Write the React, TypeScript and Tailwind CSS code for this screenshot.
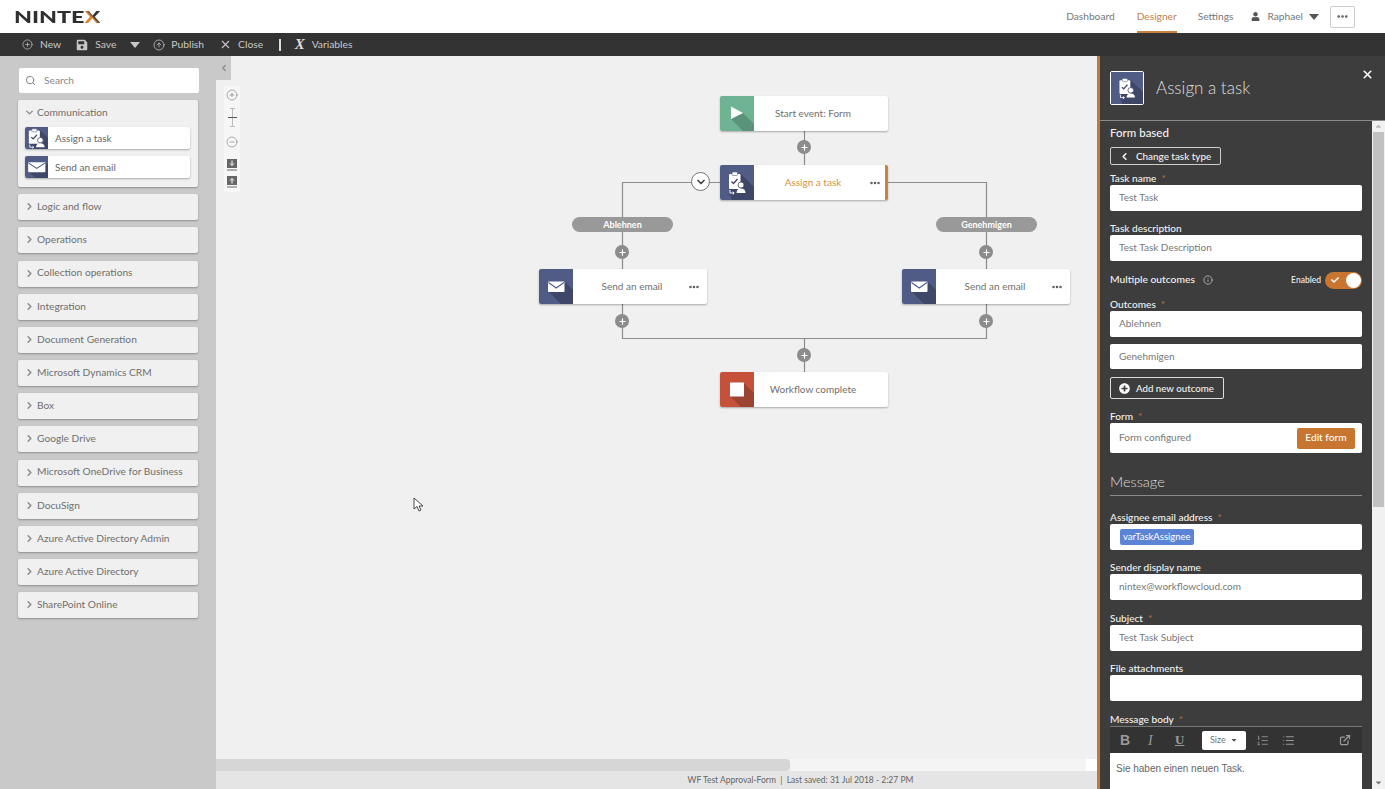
import React from 'react';
import {
  ChevronDown,
  ChevronLeft,
  ChevronRight,
  CircleArrowUp,
  CircleMinus,
  CirclePlus,
  Ellipsis,
  ExternalLink,
  Info,
  List,
  ListOrdered,
  Plus,
  Search,
  X,
} from 'lucide-react';
import { FaCaretDown, FaCheck, FaPlusCircle, FaSave, FaUser } from 'react-icons/fa';

const groups = [
  'Logic and flow',
  'Operations',
  'Collection operations',
  'Integration',
  'Document Generation',
  'Microsoft Dynamics CRM',
  'Box',
  'Google Drive',
  'Microsoft OneDrive for Business',
  'DocuSign',
  'Azure Active Directory Admin',
  'Azure Active Directory',
  'SharePoint Online',
];

type GlyphProps = { className?: string; box?: string };

const TaskGlyph: React.FC<GlyphProps> = ({ className, box = '0 0 34 35' }) => (
  <svg viewBox={box} className={className} preserveAspectRatio="none">
    <rect width="34" height="35" fill="#515c86" />
    <polygon points="20,8 34,22 34,35 12,35 9,27" fill="#3e4768" />
    <rect x="9" y="9" width="11.5" height="15" rx="1" fill="#fff" />
    <rect x="12" y="7" width="5.5" height="3.5" rx="1" fill="#fff" stroke="#515c86" strokeWidth="0.6" />
    <path d="M11.5 16.5l2 2 4-4.5" fill="none" stroke="#3e4768" strokeWidth="1.4" />
    <circle cx="21" cy="20" r="3" fill="#fff" stroke="#3e4768" strokeWidth="0.8" />
    <path d="M16.5 28c0-3.200 2-4.500 4.500-4.500s4.500 1.300 4.500 4.500z" fill="#fff" />
    <path d="M10 25v3h4M12.800 26.700l1.400 1.300-1.400 1.300" fill="none" stroke="#fff" strokeWidth="1" />
  </svg>
);

const MailGlyph: React.FC<GlyphProps> = ({ className, box = '0 0 34 35' }) => (
  <svg viewBox={box} className={className} preserveAspectRatio="none">
    <rect width="34" height="35" fill="#515c86" />
    <polygon points="9,22 26,13 34,21 34,35 22,35" fill="#3e4768" />
    <rect x="9" y="12.500" width="16.500" height="10.500" rx="1" fill="#fff" />
    <path d="M9.500 13.500l7.750 5.500 7.750-5.500" fill="none" stroke="#515c86" strokeWidth="1.100" />
  </svg>
);

const StartGlyph: React.FC<GlyphProps> = ({ className }) => (
  <svg viewBox="0 0 34 35" className={className} preserveAspectRatio="none">
    <rect width="34" height="35" fill="#6fb492" />
    <polygon points="11,23 23,17 34,28 34,35 23,35" fill="#5a9379" />
    <polygon points="11,10.500 23,17 11,23" fill="#fff" />
  </svg>
);

const StopGlyph: React.FC<GlyphProps> = ({ className }) => (
  <svg viewBox="0 0 34 35" className={className} preserveAspectRatio="none">
    <rect width="34" height="35" fill="#c5513a" />
    <polygon points="10,24 24,11 34,21 34,35 21,35" fill="#9c4331" />
    <rect x="10" y="10.500" width="14" height="14" fill="#fff" />
  </svg>
);

const Caret: React.FC<{ className?: string }> = ({ className }) => (
  <svg viewBox="0 0 10 6" className={`h-[6px] w-[10px] ${className ?? ''}`}>
    <polygon points="0,0 10,0 5,6" fill="currentColor" />
  </svg>
);

const NodeCard: React.FC<{
  pos: string;
  label: string;
  icon: React.ReactNode;
  dots?: boolean;
  selected?: boolean;
}> = ({ pos, label, icon, dots, selected }) => (
  <div
    className={`absolute ${pos} flex h-[35px] w-[168px] overflow-hidden rounded-[2px] bg-white shadow-[0_1px_2px_rgba(0,0,0,0.3)] ${
      selected ? 'border-r-[3px] border-[#c9833d]' : ''
    }`}
  >
    <div className="h-full w-[34px] shrink-0">{icon}</div>
    <div className={`flex w-[118px] shrink-0 items-center justify-center text-[10px] ${selected ? 'text-[#d8923f]' : 'text-[#6f6f6f]'}`}>
      {label}
    </div>
    {dots && (
      <div className="-ml-[3px] flex items-center text-[#555]">
        <Ellipsis size={12} strokeWidth={3} />
      </div>
    )}
  </div>
);

const PlusDot: React.FC<{ pos: string }> = ({ pos }) => (
  <div className={`absolute ${pos} flex h-[14px] w-[14px] items-center justify-center rounded-full bg-[#8c8c8c] text-white`}>
    <Plus size={9} strokeWidth={3} />
  </div>
);

const Outcome: React.FC<{ pos: string; label: string }> = ({ pos, label }) => (
  <div className={`absolute ${pos} flex h-[15px] w-[101px] items-center justify-center rounded-full bg-[#999] text-[9px] font-bold text-white`}>
    {label}
  </div>
);

const Req = () => <span className="ml-[5px] text-[#b5733a]">*</span>;

const Field: React.FC<{
  label: string;
  required?: boolean;
  value?: string;
  mt: string;
}> = ({ label, required, value, mt }) => (
  <div className={mt}>
    <div className="h-[14px] text-[10.100px] leading-[14px] font-medium text-[#f2f2f2]">
      {label}
      {required && <Req />}
    </div>
    <div className="flex h-[26px] items-center rounded-[2px] bg-white pb-[1px] pl-[9px] text-[10px] text-[#777]">{value}</div>
  </div>
);

const TopLink: React.FC<{ label: string; active?: boolean; className?: string }> = ({ label, active, className }) => (
  <div
    className={`flex h-full items-center ${className ?? ''} ${
      active ? 'border-b-2 border-[#c9833d] pt-[2px] text-[#c5804a]' : 'text-[#777]'
    }`}
  >
    {label}
  </div>
);

const ToolItem: React.FC<{ icon: React.ReactNode; label: string; className?: string; gap?: string }> = ({
  icon,
  label,
  className,
  gap = 'gap-[7px]',
}) => (
  <div className={`flex items-center ${gap} ${className ?? ''}`}>
    {icon}
    <span>{label}</span>
  </div>
);

export default function App() {
  return (
    <div className="flex h-screen w-full flex-col overflow-hidden bg-white font-[Lato,sans-serif]">
      {/* top nav */}
      <header className="flex h-[33px] shrink-0 items-center bg-white text-[10.200px]">
        <div className="ml-[14px] flex origin-left scale-x-[1.33] text-[17.500px] leading-none font-black text-[#2f2f2f]">
          NINTE<span className="bg-gradient-to-tr from-[#e2852d] from-45% to-[#333] to-55% bg-clip-text text-transparent">X</span>
        </div>
        <div className="ml-auto flex h-full items-center pr-[30px]">
          <TopLink label="Dashboard" />
          <TopLink label="Designer" active className="ml-[22px]" />
          <TopLink label="Settings" className="ml-[21px]" />
          <FaUser size={9} className="ml-[18px] text-[#555]" />
          <span className="ml-[7px] text-[#777]">Raphael</span>
          <Caret className="ml-[6px] text-[#555]" />
          <div className="ml-[11px] flex h-[22px] w-[25px] items-center justify-center rounded-[2px] border border-[#ccc] text-[#555]">
            <Ellipsis size={13} strokeWidth={3} />
          </div>
        </div>
      </header>

      {/* toolbar */}
      <div className="flex h-[23px] shrink-0 items-center bg-[#333] pl-[22px] text-[10.300px] text-[#c8c8c8]">
        <ToolItem icon={<CirclePlus size={11} strokeWidth={1.5} />} label="New" />
        <ToolItem icon={<FaSave size={12} />} label="Save" className="ml-[15px]" />
        <Caret className="ml-[14px]" />
        <ToolItem icon={<CircleArrowUp size={12} strokeWidth={1.5} />} label="Publish" className="ml-[13px]" gap="gap-[6px]" />
        <ToolItem icon={<X size={13} strokeWidth={2} />} label="Close" className="ml-[15px]" gap="gap-[6px]" />
        <div className="ml-[16px] h-[12px] w-[1.500px] bg-[#ddd]" />
        <ToolItem
          icon={<span className="font-['Liberation_Serif',serif] text-[15px] leading-none font-bold text-[#ddd] italic">X</span>}
          label="Variables"
          className="ml-[14px]"
        />
      </div>

      <div className="flex min-h-0 flex-1">
        {/* left palette */}
        <aside className="flex w-[216px] shrink-0 flex-col gap-[7.170px] bg-[#c9c9c9] pt-[12px] pl-[18px]">
          <div className="ml-px flex h-[25px] w-[180px] items-center gap-[8px] rounded-[2px] bg-white pl-[6px] text-[10.200px] text-[#888]">
            <Search size={11} className="text-[#777]" />
            Search
          </div>
          <div className="h-[87px] w-[180px] rounded-[2px] bg-[#f0f0f0] px-[7px] pt-[6px] shadow-[0_1px_2px_rgba(0,0,0,0.3)]">
            <div className="-ml-px flex h-[13px] items-center gap-[2px] text-[10.200px] text-[#6f6f6f]">
              <ChevronDown size={11} strokeWidth={3} className="text-[#888]" />
              Communication
            </div>
            <div className="mt-[8px] flex h-[22px] w-[165px] overflow-hidden rounded-[2px] bg-white shadow-[0_1px_2px_rgba(0,0,0,0.3)]">
              <TaskGlyph box="5 5 24 25" className="h-full w-[23px]" />
              <span className="ml-[7px] self-center text-[10px] text-[#666]">Assign a task</span>
            </div>
            <div className="mt-[7px] flex h-[22px] w-[165px] overflow-hidden rounded-[2px] bg-white shadow-[0_1px_2px_rgba(0,0,0,0.3)]">
              <MailGlyph box="6 6 22 23" className="h-full w-[23px]" />
              <span className="ml-[7px] self-center text-[10px] text-[#666]">Send an email</span>
            </div>
          </div>
          {groups.map((g) => (
            <div
              key={g}
              className="flex h-[26px] w-[180px] shrink-0 items-center gap-[2px] rounded-[2px] bg-[#f0f0f0] pb-[1px] pl-[6px] text-[10.200px] text-[#6f6f6f] shadow-[0_1px_2px_rgba(0,0,0,0.3)]"
            >
              <ChevronRight size={11} strokeWidth={3} className="text-[#888]" />
              {g}
            </div>
          ))}
        </aside>

        {/* canvas */}
        <main className="flex min-w-0 flex-1 flex-col bg-[#f0f0f0]">
          <div className="relative min-h-0 flex-1">
            <div className="absolute top-0 left-0 flex h-[24px] w-[15px] items-center justify-center bg-[#c9c9c9] text-[#888]">
              <ChevronLeft size={10} strokeWidth={3} />
            </div>

            {/* zoom strip */}
            <div className="absolute top-[30px] left-[8px] flex h-[106px] w-[16px] flex-col items-center bg-[#f6f6f6] pt-[3px] text-[#777]">
              <CirclePlus size={12} strokeWidth={1.2} />
              <div className="relative mt-[7px] h-[19px] w-px bg-[#bbb]">
                <div className="absolute top-0 -left-[2px] h-px w-[5px] bg-[#bbb]" />
                <div className="absolute top-[9px] -left-[4px] h-px w-[9px] bg-[#555]" />
                <div className="absolute bottom-0 -left-[2px] h-px w-[5px] bg-[#bbb]" />
              </div>
              <CircleMinus size={12} strokeWidth={1.2} className="mt-[9px]" />
              <svg viewBox="0 0 10 12" className="mt-[11px] h-[12px] w-[10px]">
                <rect width="10" height="9" fill="#666" />
                <path d="M5 1.500v5M3 4.500l2 2 2-2" fill="none" stroke="#fff" strokeWidth="1" />
                <rect y="10.500" width="10" height="1" fill="#666" />
              </svg>
              <svg viewBox="0 0 10 12" className="mt-[5px] h-[12px] w-[10px]">
                <rect width="10" height="9" fill="#666" />
                <path d="M5 7.500v-5M3 4.500l2-2 2 2" fill="none" stroke="#fff" strokeWidth="1" />
                <rect y="10.500" width="10" height="1" fill="#666" />
              </svg>
            </div>

            {/* connectors */}
            <svg className="absolute inset-0 h-full w-full" fill="none" stroke="#8c8c8c" strokeWidth="1.200">
              <path d="M588.500 75V109" />
              <path d="M504 126.500H406.500V213" />
              <path d="M672 126.500H770.500V213" />
              <path d="M406.500 248V282.500H770.500V248" />
              <path d="M588.500 282V316" />
            </svg>

            <NodeCard pos="left-[504px] top-[40px]" label="Start event: Form" icon={<StartGlyph className="h-full w-full" />} />
            <NodeCard pos="left-[504px] top-[109px]" label="Assign a task" icon={<TaskGlyph className="h-full w-full" />} selected dots />
            <NodeCard pos="left-[323px] top-[213px]" label="Send an email" icon={<MailGlyph className="h-full w-full" />} dots />
            <NodeCard pos="left-[686px] top-[213px]" label="Send an email" icon={<MailGlyph className="h-full w-full" />} dots />
            <NodeCard pos="left-[504px] top-[316px]" label="Workflow complete" icon={<StopGlyph className="h-full w-full" />} />

            <div className="absolute top-[116px] left-[475px] flex h-[19px] w-[19px] items-center justify-center rounded-full border border-[#777] bg-white text-[#444]">
              <ChevronDown size={12} strokeWidth={3.5} />
            </div>
            <Outcome pos="left-[356px] top-[161px]" label="Ablehnen" />
            <Outcome pos="left-[720px] top-[161px]" label="Genehmigen" />
            <PlusDot pos="left-[581px] top-[84px]" />
            <PlusDot pos="left-[399px] top-[189px]" />
            <PlusDot pos="left-[763px] top-[189px]" />
            <PlusDot pos="left-[399px] top-[258px]" />
            <PlusDot pos="left-[763px] top-[258px]" />
            <PlusDot pos="left-[581px] top-[292px]" />

            {/* mouse pointer */}
            <svg viewBox="0 0 12 16" className="absolute top-[441px] left-[197px] h-[16px] w-[12px]">
              <path d="M1 1v11l3-2.500 2 4.500 2-1-2-4h4z" fill="#fff" stroke="#333" strokeWidth="0.9" />
            </svg>
          </div>

          {/* horizontal scrollbar */}
          <div className="flex h-[12px] shrink-0 bg-[#f4f4f4]">
            <div className="h-full w-[574px] rounded-r-[4px] bg-[#d6d6d6]" />
            <div className="ml-auto h-full w-[11px] bg-white" />
          </div>
          <div className="flex h-[18px] shrink-0 items-center justify-center bg-[#e5e5e5] pl-[288px] text-[8.500px] text-[#666]">
            WF Test Approval-Form&nbsp; |&nbsp; Last saved: 31 Jul 2018 - 2:27 PM
          </div>
        </main>

        {/* right settings panel */}
        <aside className="flex w-[288px] shrink-0 flex-col border-l-[3px] border-[#c07a3e] bg-[#3d3d3d] text-[#f2f2f2]">
          <div className="flex h-[65px] shrink-0 items-center border-b border-[#8a8a8a] pl-[10px]">
            <div className="h-[34px] w-[34px] overflow-hidden rounded-[2px] border border-white">
              <TaskGlyph className="h-full w-full" />
            </div>
            <div className="ml-[12px] text-[17px] font-light text-[#ddd]">Assign a task</div>
            <X size={13} strokeWidth={3} className="mt-[-27px] ml-auto mr-[11px] text-white" />
          </div>

          <div className="flex min-h-0 flex-1">
            <div className="min-w-0 flex-1 overflow-hidden pl-[10px] pr-[10px]">
              <div className="w-[252px]">
                <div className="mt-[5px] h-[14px] text-[11.500px] leading-[14px] font-medium">Form based</div>
                <div className="mt-[7px] flex h-[18px] w-[111px] items-center gap-[6px] rounded-[2px] border border-[#ccc] pl-[8px] text-[9.900px] font-medium">
                  <ChevronLeft size={11} strokeWidth={3.5} />
                  Change task type
                </div>

                <Field label="Task name" required value="Test Task" mt="mt-[6px]" />
                <Field label="Task description" value="Test Task Description" mt="mt-[10px]" />

                <div className="mt-[8px] flex h-[22px] items-center text-[10.300px] font-medium">
                  Multiple outcomes
                  <Info size={10} className="ml-[8px] text-[#bbb]" />
                  <span className="ml-auto text-[8.500px]">Enabled</span>
                  <div className="ml-[4px] flex h-[17px] w-[37px] items-center justify-between rounded-full bg-[#c8752f] pr-[1px] pl-[6px]">
                    <FaCheck size={8} className="text-white" />
                    <div className="h-[15px] w-[15px] rounded-full bg-white" />
                  </div>
                </div>

                <Field label="Outcomes" required value="Ablehnen" mt="mt-[6px]" />
                <div className="mt-[7px] flex h-[25px] items-center rounded-[2px] bg-white pl-[9px] text-[10px] text-[#777]">Genehmigen</div>
                <div className="mt-[8px] flex h-[22px] w-[114px] items-center gap-[6px] rounded-[2px] border border-[#ddd] pl-[8px] text-[9.700px] font-medium">
                  <FaPlusCircle size={11} className="text-white" />
                  Add new outcome
                </div>

                <div className="mt-[10px] h-[14px] text-[10.100px] leading-[14px] font-medium">
                  Form
                  <Req />
                </div>
                <div className="flex h-[30px] items-center justify-between rounded-[2px] bg-white pr-[7px] pl-[9px] text-[10px] text-[#777]">
                  <span className="mb-[1px]">Form configured</span>
                  <div className="flex h-[21px] w-[58px] items-center justify-center rounded-[2px] bg-[#c8752f] text-[10.200px] font-medium text-white">
                    Edit form
                  </div>
                </div>

                <div className="mt-[20px] h-[18px] text-[14.500px] leading-[18px] font-light text-[#ddd]">Message</div>
                <div className="mt-[4px] h-px bg-[#8a8a8a]" />

                <div className="mt-[14px] h-[14px] text-[10.100px] leading-[14px] font-medium">
                  Assignee email address
                  <Req />
                </div>
                <div className="flex h-[26px] items-center rounded-[2px] bg-white pl-[10px]">
                  <span className="flex h-[16px] items-center rounded-[2px] bg-[#5b84d6] px-[3px] text-[9.500px] text-white">varTaskAssignee</span>
                </div>

                <Field label="Sender display name" value="nintex@workflowcloud.com" mt="mt-[10px]" />
                <Field label="Subject" required value="Test Task Subject" mt="mt-[11px]" />
                <Field label="File attachments" mt="mt-[10px]" />

                <div className="mt-[11px] h-[14px] text-[10.100px] leading-[14px] font-medium">
                  Message body
                  <Req />
                </div>
                <div className="flex h-[27px] items-center border-t border-[#777] bg-[#333] pl-[10px] text-[#9a9a9a]">
                  <span className="w-[28px] font-['Liberation_Sans',sans-serif] text-[14px] font-bold">B</span>
                  <span className="w-[27px] font-['Liberation_Serif',serif] text-[14px] italic">I</span>
                  <span className="w-[27px] font-['Liberation_Serif',serif] text-[13px] font-bold underline">U</span>
                  <div className="flex h-[19px] w-[44px] items-center justify-between rounded-[2px] bg-white px-[8px] text-[9px] text-[#777]">
                    Size
                    <FaCaretDown size={8} className="text-[#555]" />
                  </div>
                  <ListOrdered size={13} strokeWidth={1.5} className="ml-[10px]" />
                  <List size={13} strokeWidth={2} className="ml-[13px]" />
                  <ExternalLink size={12} strokeWidth={2.5} className="ml-auto mr-[11px]" />
                </div>
                <div className="h-[60px] bg-white pt-[8px] pl-[6px] font-['Liberation_Sans',sans-serif] text-[10px] text-[#666]">
                  Sie haben einen neuen Task.
                </div>
              </div>
            </div>

            {/* panel scrollbar */}
            <div className="flex w-[13px] shrink-0 flex-col items-center bg-[#f1f1f1] text-[#777]">
              <FaCaretDown size={9} className="mt-[1px] rotate-180 text-[#bbb]" />
              <div className="mt-[1px] h-[375px] w-[11px] bg-[#c1c1c1]" />
              <FaCaretDown size={9} className="mt-auto mb-[2px]" />
            </div>
          </div>
        </aside>
      </div>
    </div>
  );
}
